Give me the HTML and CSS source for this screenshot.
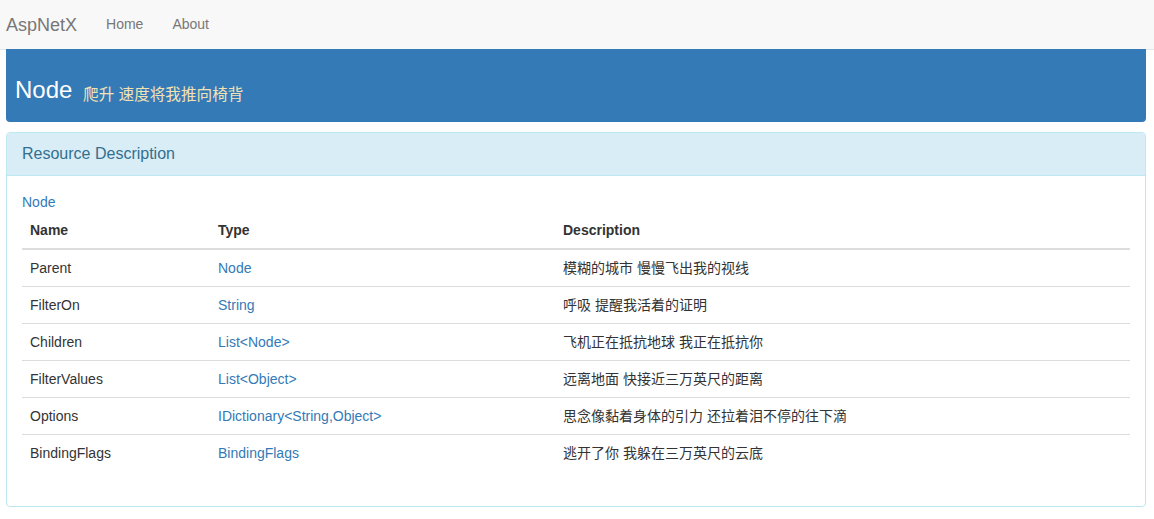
FILE: index.html
```html
<!DOCTYPE html>
<html>
<head>
<meta charset="utf-8">
<title>AspNetX</title>
<link rel="stylesheet" href="styles.css">
</head>
<body>
<nav class="navbar">
  <a class="brand" href="#">AspNetX</a>
  <a class="nav-link" href="#">Home</a>
  <a class="nav-link" href="#">About</a>
</nav>
<main class="container">
  <header class="title-bar">
    <h3 class="title">Node <small class="subtitle">爬升 速度将我推向椅背</small></h3>
  </header>
  <section class="panel">
    <div class="panel-heading">Resource Description</div>
    <div class="panel-body">
      <a class="type-link" href="#">Node</a>
      <table class="table">
        <thead>
          <tr><th class="col-name">Name</th><th class="col-type">Type</th><th>Description</th></tr>
        </thead>
        <tbody>
          <tr><td>Parent</td><td><a href="#">Node</a></td><td>模糊的城市 慢慢飞出我的视线</td></tr>
          <tr><td>FilterOn</td><td><a href="#">String</a></td><td>呼吸 提醒我活着的证明</td></tr>
          <tr><td>Children</td><td><a href="#">List&lt;Node&gt;</a></td><td>飞机正在抵抗地球 我正在抵抗你</td></tr>
          <tr><td>FilterValues</td><td><a href="#">List&lt;Object&gt;</a></td><td>远离地面 快接近三万英尺的距离</td></tr>
          <tr><td>Options</td><td><a href="#">IDictionary&lt;String,Object&gt;</a></td><td>思念像黏着身体的引力 还拉着泪不停的往下滴</td></tr>
          <tr><td>BindingFlags</td><td><a href="#">BindingFlags</a></td><td>逃开了你 我躲在三万英尺的云底</td></tr>
        </tbody>
      </table>
    </div>
  </section>
</main>
</body>
</html>
```
FILE: styles.css
```css
* { box-sizing: border-box; }
html, body { margin: 0; padding: 0; }
body {
  font-family: "Liberation Sans", Arial, "Noto Sans CJK SC", sans-serif;
  font-size: 14px;
  line-height: 1.42857;
  color: #333;
  background: #fff;
}
a { color: #337ab7; text-decoration: none; }

.navbar {
  height: 50px;
  background: #f8f8f8;
  border-bottom: 1px solid #e7e7e7;
  display: flex;
  align-items: center;
  padding: 0 6px;
}
.brand {
  font-size: 18px;
  color: #777;
  line-height: 20px;
  margin-right: 14px;
}
.nav-link {
  color: #777;
  padding: 0 15px;
  line-height: 20px;
  margin-top: -2px;
}
.nav-link + .nav-link { margin-left: -1px; }

.container {
  width: 1140px;
  margin: 0 0 0 6px;
}
.title-bar {
  background: #337ab7;
  color: #fff;
  height: 73px;
  margin-top: -1px;
  border-radius: 0 0 4px 4px;
  padding: 26px 9px 0;
}
.title {
  margin: 0;
  font-size: 24px;
  font-weight: 500;
  line-height: 30px;
}
.subtitle {
  font-size: 15.6px;
  color: #f3e2b3;
  margin-left: 4px;
  font-weight: 400;
  vertical-align: -2px;
}

.panel {
  margin-top: 10px;
  border: 1px solid #bce8f1;
  border-radius: 4px;
  background: #fff;
}
.panel-heading {
  background: #d9edf7;
  color: #31708f;
  border-bottom: 1px solid #bce8f1;
  border-radius: 3px 3px 0 0;
  padding: 10px 15px;
  font-size: 16px;
  line-height: 22px;
}
.panel-body {
  padding: 15px;
}
.type-link {
  display: block;
  padding-top: 1px;
  margin-bottom: 0;
  line-height: 20px;
}
.table {
  width: 100%;
  border-collapse: collapse;
  border-spacing: 0;
  margin-bottom: 20px;
}
.table th {
  text-align: left;
  font-weight: bold;
  padding: 8px;
  line-height: 20px;
  border-bottom: 2px solid #ddd;
}
.table td {
  padding: 8px;
  line-height: 20px;
  border-top: 1px solid #ddd;
}
.table tbody tr:first-child td { border-top: 0; }
.col-name { width: 188px; }
.col-type { width: 345px; }
```
